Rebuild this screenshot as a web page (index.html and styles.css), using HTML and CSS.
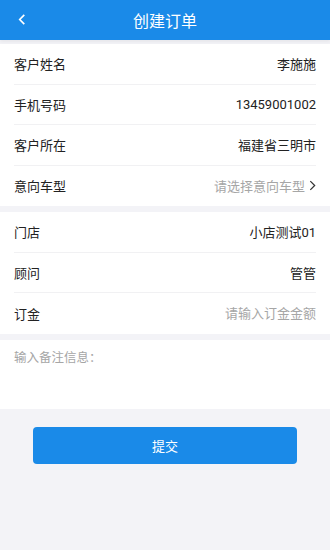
FILE: index.html
```html
<!DOCTYPE html>
<html lang="zh-CN">
  <head>
    <meta charset="UTF-8" />
    <meta name="viewport" content="width=device-width, initial-scale=1" />
    <title>创建订单</title>
    <link rel="stylesheet" href="styles.css">
  </head>
  <body>
    <header class="topbar">
      <a class="back" href="#" aria-label="返回">
        <svg viewBox="0 0 8 12" aria-hidden="true">
          <polyline points="6.5 1 1.5 6 6.5 11"></polyline>
        </svg>
      </a>
      <h1>创建订单</h1>
    </header>

    <form class="order" novalidate>
      <section class="group">
        <div class="row">
          <span class="label">客户姓名</span>
          <span class="value">李施施</span>
        </div>
        <div class="row">
          <span class="label">手机号码</span>
          <span class="value">13459001002</span>
        </div>
        <div class="row">
          <span class="label">客户所在</span>
          <span class="value">福建省三明市</span>
        </div>
        <div class="row">
          <span class="label">意向车型</span>
          <span class="value muted">
            请选择意向车型
            <svg class="arrow" viewBox="0 0 8 12" aria-hidden="true">
              <polyline points="1.5 1 6.5 6 1.5 11"></polyline>
            </svg>
          </span>
        </div>
      </section>

      <section class="group">
        <div class="row">
          <span class="label">门店</span>
          <span class="value">小店测试01</span>
        </div>
        <div class="row">
          <span class="label">顾问</span>
          <span class="value">管管</span>
        </div>
        <div class="row">
          <label class="label" for="deposit">订金</label>
          <input class="value-input" type="text" id="deposit" placeholder="请输入订金金额" />
        </div>
      </section>

      <section class="group remark-group">
        <textarea class="remark" placeholder="输入备注信息："></textarea>
      </section>

      <div class="actions">
        <button type="button" class="submit">提交</button>
      </div>
    </form>
  </body>
</html>
```

FILE: styles.css
```css
:root {
  --clr-primary: #1a8ae8;
  --clr-bg: #f3f3f7;
  --clr-text: #222;
  --clr-muted: #a6a6a6;
  --clr-line: #f1f1f3;
  --font-family: Roboto, "Noto Sans CJK SC", sans-serif;
}

* {
  box-sizing: border-box;
}

body {
  margin: 0;
  background: var(--clr-bg);
  font-family: var(--font-family);
  color: var(--clr-text);
  font-size: 13px;
}

.topbar {
  height: 40px;
  background: var(--clr-primary);
  display: flex;
  align-items: center;
  justify-content: center;
  position: relative;
  box-shadow: 0 2px 3px rgb(0 0 0 / 0.05);
}

.topbar h1 {
  margin: 0;
  font-size: 16px;
  font-weight: 400;
  color: #fff;
}

.back {
  position: absolute;
  left: 18px;
  top: 12px;
  width: 12px;
  height: 14px;
  display: flex;
  align-items: center;
}

.back svg {
  width: 8px;
  height: 11px;
  fill: none;
  stroke: #fff;
  stroke-width: 1.8;
}

.order {
  padding-top: 4px;
}

.group {
  background: #fff;
  padding: 0 14px;
  margin-bottom: 6px;
}

.row {
  height: 40.5px;
  display: flex;
  align-items: center;
  justify-content: space-between;
  border-bottom: 1px solid var(--clr-line);
}

.row:last-child {
  border-bottom: none;
}

.label {
  font-size: 13px;
}

.value {
  display: flex;
  align-items: center;
  gap: 4px;
}

.muted {
  color: var(--clr-muted);
}

.arrow {
  width: 7px;
  height: 11px;
  fill: none;
  stroke: #333;
  stroke-width: 1.4;
}

.value-input {
  border: none;
  outline: none;
  text-align: right;
  font-family: var(--font-family);
  font-size: 13px;
  width: 180px;
  padding: 0;
  color: var(--clr-text);
}

.value-input::placeholder,
.remark::placeholder {
  color: var(--clr-muted);
}

.remark-group {
  padding: 0;
  margin-bottom: 0;
}

.remark {
  display: block;
  width: 100%;
  height: 69px;
  border: none;
  outline: none;
  resize: none;
  padding: 7px 14px;
  font-family: var(--font-family);
  font-size: 12.5px;
  color: var(--clr-text);
  background: #fff;
}

.actions {
  padding: 18px 33px;
}

.submit {
  display: block;
  width: 100%;
  height: 37px;
  border: none;
  border-radius: 4px;
  background: var(--clr-primary);
  color: #fff;
  font-family: var(--font-family);
  font-size: 13px;
  cursor: pointer;
}
```
